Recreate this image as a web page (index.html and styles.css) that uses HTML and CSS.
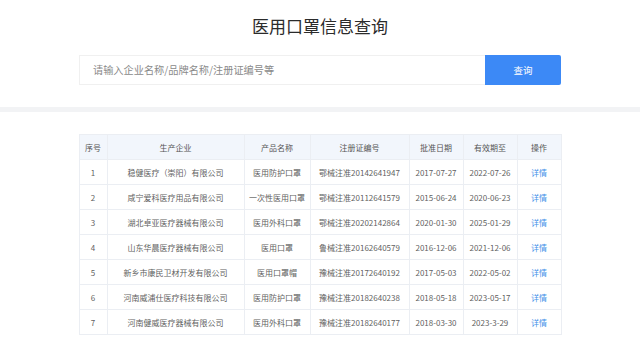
FILE: index.html
```html
<!DOCTYPE html>
<html lang="zh-CN">
<head>
<meta charset="utf-8">
<title>医用口罩信息查询</title>
<link rel="stylesheet" href="styles.css">
</head>
<body>
<div class="hero">
  <h1 class="title">医用口罩信息查询</h1>
  <div class="search">
    <div class="search-input">请输入企业名称/品牌名称/注册证编号等</div>
    <div class="search-btn">查询</div>
  </div>
</div>
<div class="band"></div>
<div class="content">
  <table class="grid">
    <colgroup>
      <col class="c1"><col class="c2"><col class="c3"><col class="c4"><col class="c5"><col class="c6"><col class="c7">
    </colgroup>
    <thead>
      <tr><th>序号</th><th>生产企业</th><th>产品名称</th><th>注册证编号</th><th>批准日期</th><th>有效期至</th><th>操作</th></tr>
    </thead>
    <tbody>
      <tr><td>1</td><td>稳健医疗（崇阳）有限公司</td><td>医用防护口罩</td><td>鄂械注准20142641947</td><td>2017-07-27</td><td>2022-07-26</td><td class="link">详情</td></tr>
      <tr><td>2</td><td>咸宁爱科医疗用品有限公司</td><td>一次性医用口罩</td><td>鄂械注准20112641579</td><td>2015-06-24</td><td>2020-06-23</td><td class="link">详情</td></tr>
      <tr><td>3</td><td>湖北卓亚医疗器械有限公司</td><td>医用外科口罩</td><td>鄂械注准20202142864</td><td>2020-01-30</td><td>2025-01-29</td><td class="link">详情</td></tr>
      <tr><td>4</td><td>山东华晨医疗器械有限公司</td><td>医用口罩</td><td>鲁械注准20162640579</td><td>2016-12-06</td><td>2021-12-06</td><td class="link">详情</td></tr>
      <tr><td>5</td><td>新乡市康民卫材开发有限公司</td><td>医用口罩帽</td><td>豫械注准20172640192</td><td>2017-05-03</td><td>2022-05-02</td><td class="link">详情</td></tr>
      <tr><td>6</td><td>河南威浦仕医疗科技有限公司</td><td>医用防护口罩</td><td>豫械注准20182640238</td><td>2018-05-18</td><td>2023-05-17</td><td class="link">详情</td></tr>
      <tr><td>7</td><td>河南健威医疗器械有限公司</td><td>医用外科口罩</td><td>豫械注准20182640177</td><td>2018-03-30</td><td>2023-3-29</td><td class="link">详情</td></tr>
    </tbody>
  </table>
</div>
</body>
</html>
```

FILE: styles.css
```css
html, body {
  margin: 0;
  padding: 0;
  background: #ffffff;
}
body {
  font-family: "Noto Sans CJK SC", "Noto Sans", sans-serif;
  color: #333;
  overflow: hidden;
}
.hero {
  padding-top: 14px;
}
.title {
  margin: 0;
  text-align: center;
  font-size: 17px;
  line-height: 24px;
  font-weight: 400;
  color: #2b2b2b;
}
.search {
  width: 482px;
  margin: 17px auto 0;
  display: flex;
  height: 30px;
}
.search-input {
  flex: 1;
  box-sizing: border-box;
  border: 1px solid #f0f0f0;
  border-right: none;
  padding-left: 13px;
  font-size: 10.2px;
  line-height: 28px;
  color: #8a8a8a;
}
.search-btn {
  width: 76px;
  background: #3c89f6;
  color: #fff;
  font-size: 9.5px;
  line-height: 30px;
  text-align: center;
  border-radius: 0 2px 2px 0;
}
.band {
  margin-top: 22px;
  height: 5px;
  background: #f2f3f5;
}
.content {
  padding-top: 22px;
}
.grid {
  width: 482px;
  margin: 0 auto;
  border-collapse: collapse;
  table-layout: fixed;
  font-size: 8px;
  color: #5f5f5f;
}
.c1 { width: 28px; }
.c2 { width: 137px; }
.c3 { width: 66px; }
.c4 { width: 99px; }
.c5 { width: 54px; }
.c6 { width: 54px; }
.c7 { width: 44px; }
.grid th, .grid td {
  border: 1px solid #ebeef3;
  height: 24px;
  padding: 0;
  text-align: center;
  white-space: nowrap;
  overflow: hidden;
}
.grid th {
  background: #f2f6fc;
  font-weight: 400;
  color: #555;
}
.grid td.link {
  color: #3f8fe8;
}
```
